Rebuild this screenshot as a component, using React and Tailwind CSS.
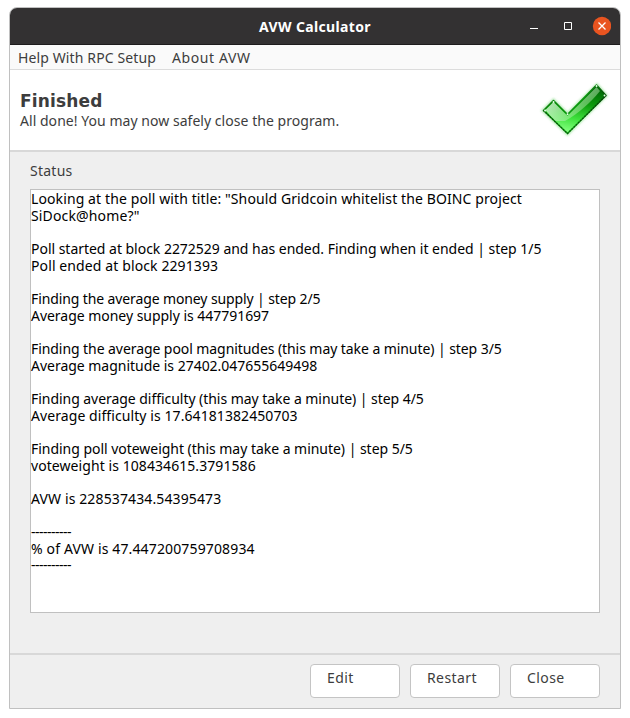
const lines = [
  ['Looking at the poll with title: "Should Gridcoin whitelist the BOINC project', 'tracking-[0.107px]'],
  ['SiDock@home?"', 'tracking-[0.15px]'],
  ['', ''],
  ['Poll started at block 2272529 and has ended. Finding when it ended | step 1/5', 'tracking-[-0.026px]'],
  ['Poll ended at block 2291393', 'tracking-[0.11px]'],
  ['', ''],
  ['Finding the average money supply | step 2/5', 'tracking-[-0.115px]'],
  ['Average money supply is 447791697', 'tracking-[-0.03px]'],
  ['', ''],
  ['Finding the average pool magnitudes (this may take a minute) | step 3/5', 'tracking-[-0.07px]'],
  ['Average magnitude is 27402.047655649498', 'tracking-[-0.02px]'],
  ['', ''],
  ['Finding average difficulty (this may take a minute) | step 4/5', 'tracking-[-0.045px]'],
  ['Average difficulty is 17.64181382450703', 'tracking-[0.08px]'],
  ['', ''],
  ['Finding poll voteweight (this may take a minute) | step 5/5', 'tracking-[-0.03px]'],
  ['voteweight is 108434615.3791586', 'tracking-[0.07px]'],
  ['', ''],
  ['AVW is 228537434.54395473', 'tracking-[0.12px]'],
  ['', ''],
  ['----------', 'tracking-[-0.5px]'],
  ['% of AVW is 47.447200759708934', 'tracking-[0.14px]'],
  ['----------', 'tracking-[-0.5px]'],
];

function Check() {
  return (
    <svg className="h-[60px] w-[72px]" viewBox="538 80 72 60" fill="none">
      <defs>
        <linearGradient id="fill" x1="590" y1="88" x2="580" y2="134" gradientUnits="userSpaceOnUse">
          <stop offset="0" stopColor="#006a06" />
          <stop offset="0.35" stopColor="#0c9a0c" />
          <stop offset="0.7" stopColor="#3ee03c" />
          <stop offset="1" stopColor="#80ff7c" />
        </linearGradient>
        <linearGradient id="gloss" x1="550" y1="100" x2="572" y2="126" gradientUnits="userSpaceOnUse">
          <stop offset="0" stopColor="#f0f4f0" stopOpacity="0.75" />
          <stop offset="1" stopColor="#b8f0b0" stopOpacity="0.35" />
        </linearGradient>
        <linearGradient id="edge" x1="545" y1="95" x2="607" y2="110" gradientUnits="userSpaceOnUse">
          <stop offset="0" stopColor="#0b7d0b" />
          <stop offset="0.6" stopColor="#0b9a10" />
          <stop offset="1" stopColor="#043c06" />
        </linearGradient>
        <filter id="halo" x="-20%" y="-20%" width="140%" height="140%">
          <feGaussianBlur stdDeviation="1.2" />
        </filter>
      </defs>
      <path d="M543 110.5 553.5 100 567.5 114 597 85 606 95.5 567.5 134Z" stroke="#79d979" strokeOpacity="0.6" strokeWidth="3" filter="url(#halo)" />
      <path d="M543.5 110.5 553.5 100.5 567.5 114.5 596.5 85 606 95.5 567.5 133.5Z" fill="url(#fill)" />
      <path d="M545.5 110 553.5 102 567.5 116 596.5 87 600 91 C590 103 579 113 565 121 L555 121Z" fill="url(#gloss)" />
      <path d="M543.5 110.5 553.5 100.5 567.5 114.5 596.5 85 606 95.5 567.5 133.5Z" stroke="url(#edge)" strokeWidth="1.5" strokeLinejoin="round" />
      <path d="M543.5 110.5 567.5 133.5 606 95.5" stroke="#043c06" strokeWidth="1.3" strokeDasharray="1.5 1.5" strokeOpacity="0.7" />
      <path d="M545 110.5h.1M553.5 102h.1M567.5 114.2h.1M596.5 86h.1M604.5 95.5h.1" stroke="#e8ffe8" strokeWidth="1.8" strokeLinecap="round" />
    </svg>
  );
}

function Button({ children }) {
  return (
    <button className="flex h-[34px] w-[90px] items-start rounded-[4px] border border-[#c4c4c4] bg-white pt-[3px] pl-4 text-left leading-5 tracking-[0.4px]">
      {children}
    </button>
  );
}

export default function App() {
  return (
    <div className="h-[718px] w-[630px] bg-white pt-[7px] pl-[9px] font-['Noto_Sans',sans-serif] text-[14px] text-[#3d3d3d]">
      <div className="flex h-[702px] w-[612px] flex-col overflow-hidden rounded-t-[8px] border border-[#c0c0c0] bg-[#efefef]">
        <header className="flex h-[37px] shrink-0 items-center border-b border-[#1e1c1d] bg-[#333132]">
          <div className="w-[110px]" />
          <h1 className="flex-1 text-center text-[14px] font-bold tracking-[0.35px] text-white">AVW Calculator</h1>
          <div className="flex w-[110px] justify-end pr-[9px]">
            <svg className="h-5 w-[84px]" viewBox="527 16 84 20">
              <path d="M530 28h8v1h-8z" fill="#fff" />
              <path d="M564.5 22.5h7v7h-7z" fill="none" stroke="#fff" />
              <circle cx="602" cy="26" r="9.2" fill="#e95420" />
              <path d="M598.5 22.5l7 7m0-7l-7 7" stroke="#fff" strokeWidth="1.3" />
            </svg>
          </div>
        </header>
        <nav className="flex h-[25px] shrink-0 items-center gap-4 border-b border-[#dcdcdc] bg-[#fafafa] pl-2">
          <span className="tracking-[0.12px]">Help With RPC Setup</span>
          <span className="tracking-[0.6px]">About AVW</span>
        </nav>
        <section className="flex h-[82px] shrink-0 justify-between border-b-2 border-[#d8d8d8] bg-white pl-[10px]">
          <div className="pt-[19px]">
            <h2 className="font-['DejaVu_Sans',sans-serif] text-[17px] leading-6 font-bold tracking-[0.15px]">Finished</h2>
            <p className="leading-4 tracking-[0.04px]">All done! You may now safely close the program.</p>
          </div>
          <div className="pt-[10px] pr-[10px]"><Check /></div>
        </section>
        <main className="flex h-[501px] shrink-0 flex-col px-5 pt-[9px]">
          <div className="leading-5 tracking-[0.25px]">Status</div>
          <div className="mt-2 h-[424px] border border-[#c0c0c0] bg-white pt-[1px] text-black">
            {lines.map(([text, tracking], i) => (
              <div key={i} className={`h-[16.667px] leading-[16.667px] whitespace-pre ${tracking}`}>{text}</div>
            ))}
          </div>
        </main>
        <footer className="flex flex-1 justify-end gap-[10px] border-t-2 border-[#d8d8d8] pt-[9px] pr-5">
          <Button>Edit</Button>
          <Button>Restart</Button>
          <Button>Close</Button>
        </footer>
      </div>
    </div>
  );
}
